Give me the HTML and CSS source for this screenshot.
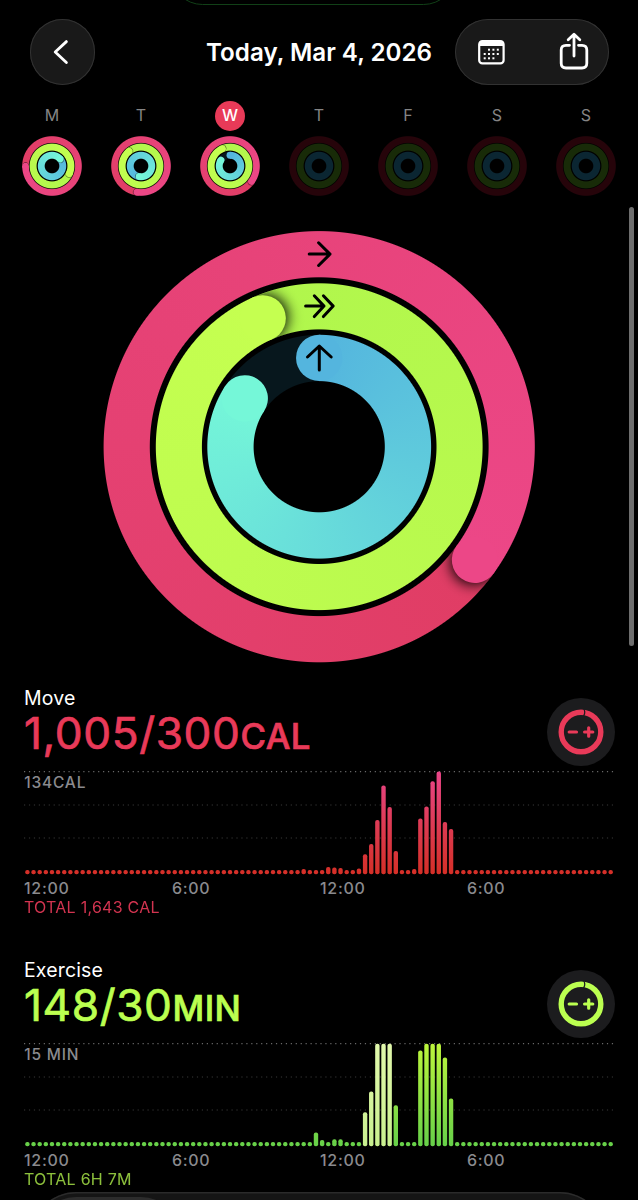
FILE: index.html
```
<!DOCTYPE html>
<html lang="en">
<head>
    <meta charset="UTF-8">
    <meta name="viewport" content="width=device-width, initial-scale=1.0">
    <title>Activity</title>
    <link rel="stylesheet" href="styles.css">
</head>
<body>

<div class="screen">
    <div class="island"></div>

    <header class="header">
        <a class="back" href="#">
            <svg width="65" height="66" viewBox="0 0 65 66"><path class="line" d="M36.4 22.6 L25.2 33 L36.4 43.6"/></svg>
        </a>
        <h1 class="title">Today, Mar 4, 2026</h1>
        <div class="actions">
            <svg width="154" height="66" viewBox="455 19 154 66">
                <rect class="line thin" x="479.2" y="41.2" width="24.4" height="22.2" rx="3.2"/>
                <path class="fill" d="M479 46 V44 Q479 41 482 41 H501 Q504 41 504 44 V46 Z"/>
                <g class="fill">
                    <rect x="488" y="48.7" width="2" height="2"/><rect x="492.4" y="48.7" width="2" height="2"/><rect x="496.8" y="48.7" width="2" height="2"/>
                    <rect x="483.7" y="53" width="2" height="2"/><rect x="488" y="53" width="2" height="2"/><rect x="492.4" y="53" width="2" height="2"/><rect x="496.8" y="53" width="2" height="2"/>
                    <rect x="483.7" y="57.3" width="2" height="2"/><rect x="488" y="57.3" width="2" height="2"/><rect x="492.4" y="57.3" width="2" height="2"/>
                </g>
                <path class="line" d="M569.5 45.3 H566 Q561.2 45.3 561.2 50 V63.3 Q561.2 68 566 68 H582 Q586.8 68 586.8 63.3 V50 Q586.8 45.3 582 45.3 H578.5"/>
                <path class="line" d="M574 35 V56 M568.2 39.7 L574 34.2 L579.8 39.7"/>
            </svg>
        </div>
    </header>

    <ul class="week" id="week"></ul>

    <div class="dial" id="dial">
        <svg class="arrows" width="432" height="432" viewBox="103 231 432 432">
            <path d="M309.2 254.1 H330 M318.6 242.8 L330 254.1 L318.6 265.5"/>
            <path d="M305.6 306.1 H324 M314.3 295.8 L324 306.1 L314.3 316.6 M323.4 295.8 L333.2 306.1 L323.4 316.6"/>
            <path d="M319.3 370 V346 M307.5 357 L319.3 346 L331.2 357"/>
        </svg>
    </div>

    <section class="metric move">
        <div class="metric-head">
            <div>
                <h2>Move</h2>
                <p class="value">1,005/300<span>CAL</span></p>
            </div>
            <button class="goal">
                <svg width="68" height="68" viewBox="-34 -34 68 68">
                    <circle r="19.8"/>
                    <path class="cut" d="M2.6 -23.5 Q5 -19.8 2.6 -16"/>
                    <path class="sign" d="M-11.8 0 H-4.5 M3.6 0 H11.8 M7.7 -4.2 V4.2"/>
                </svg>
            </button>
        </div>
        <svg class="chart" id="move-chart" width="590" height="108" viewBox="24 0 590 108">
            <defs>
                <linearGradient id="red" gradientUnits="userSpaceOnUse" x1="0" y1="104" x2="0" y2="2">
                    <stop offset="0" stop-color="#d52f27"/>
                    <stop offset=".45" stop-color="#dc3a50"/>
                    <stop offset="1" stop-color="#e94588"/>
                </linearGradient>
            </defs>
            <text x="24.3" y="18.3">134CAL</text>
        </svg>
        <div class="axis"><span>12:00</span><span>6:00</span><span>12:00</span><span>6:00</span></div>
        <p class="total">TOTAL 1,643 CAL</p>
    </section>

    <section class="metric exercise">
        <div class="metric-head">
            <div>
                <h2>Exercise</h2>
                <p class="value">148/30<span>MIN</span></p>
            </div>
            <button class="goal">
                <svg width="68" height="68" viewBox="-34 -34 68 68">
                    <circle r="19.8"/>
                    <path class="cut" d="M2.6 -23.5 Q5 -19.8 2.6 -16"/>
                    <path class="sign" d="M-11.8 0 H-4.5 M3.6 0 H11.8 M7.7 -4.2 V4.2"/>
                </svg>
            </button>
        </div>
        <svg class="chart" id="exercise-chart" width="590" height="108" viewBox="24 0 590 108">
            <defs>
                <linearGradient id="green" gradientUnits="userSpaceOnUse" x1="0" y1="104" x2="0" y2="2">
                    <stop offset="0" stop-color="#66d049"/>
                    <stop offset="1" stop-color="#bdf53c"/>
                </linearGradient>
                <linearGradient id="pale" gradientUnits="userSpaceOnUse" x1="0" y1="104" x2="0" y2="2">
                    <stop offset="0" stop-color="#c9f08f"/>
                    <stop offset="1" stop-color="#e2f9ac"/>
                </linearGradient>
            </defs>
            <text x="24.3" y="18.3">15 MIN</text>
        </svg>
        <div class="axis"><span>12:00</span><span>6:00</span><span>12:00</span><span>6:00</span></div>
        <p class="total">TOTAL 6H 7M</p>
    </section>

    <div class="scrollbar"></div>
    <nav class="tabbar"><div class="tab"></div></nav>
</div>

<script>
    var NS = "http://www.w3.org/2000/svg";

    // first colour, last colour of each ring
    var colors = [["#e03d64", "#ec4787"], ["#b0f64c", "#c5ff50"], ["#54b5de", "#75f7d8"]];
    var empty = ["#26040a", "#182b08", "#0b2632"];

    // outer and inner radius of each ring
    var big = [[215.6, 169.4], [163.4, 117.3], [111.9, 65.6]];
    var small = [[29.8, 23.1], [22.4, 15.4], [14.2, 7.3]];

    // ends: where each ring stops, in degrees from the top
    var days = [
        {name: "M", ends: [270, 114, 50]},
        {name: "T", ends: [189, 321, 190]},
        {name: "W", ends: [126, 336.3, 303], open: true, today: true},
        {name: "T"},
        {name: "F"},
        {name: "S"},
        {name: "S"}
    ];

    function addRing(box, sizes, i, end, open) {
        var ring = document.createElement("div");
        ring.className = "ring";
        var c = end == null ? [empty[i], empty[i]] : colors[i];
        var partial = open && i == 2;
        ring.style.setProperty("--outer", sizes[i][0] + "px");
        ring.style.setProperty("--inner", sizes[i][1] + "px");
        ring.style.setProperty("--start", (partial ? 0 : end || 0) + "deg");
        ring.style.setProperty("--sweep", (partial ? end : 360) + "deg");
        ring.style.setProperty("--a", c[0]);
        ring.style.setProperty("--b", c[1]);
        box.appendChild(ring);
    }

    function capSvg(sizes, day, w, cx, cy) {
        var s = "<svg class='caps' width='" + w + "' height='" + w + "'>";
        var blur = w > 100 ? 7 : 0.6;
        for (var i = 0; i < 3; i++) {
            var o = sizes[i][0], n = sizes[i][1];
            var r = (o + n) / 2, half = (o - n) / 2;
            var partial = day.open && i == 2;
            var id = "half-" + day.name + "-" + w + "-" + i;
            s += "<g transform='translate(" + cx + " " + cy + ") rotate(" + day.ends[i] + ")'>";
            if (!partial) {
                // the shadow falls only on the ring itself, ahead of the cap
                s += "<clipPath id='" + id + "'><path d='M0 " + -o + " A" + o + " " + o + " 0 0 1 0 " + o +
                     " V" + n + " A" + n + " " + n + " 0 0 0 0 " + -n + " Z'/></clipPath>";
                s += "<g clip-path='url(#" + id + ")'><circle cx='" + blur * 0.3 + "' cy='" + -r + "' r='" + half +
                     "' style='filter:blur(" + blur + "px)'/></g>";
            }
            s += "<circle cy='" + -r + "' r='" + half + "' fill='" + colors[i][1] + "'/></g>";
            if (partial) {
                s += "<circle cx='" + cx + "' cy='" + (cy - r) + "' r='" + half + "' fill='" + colors[i][0] + "'/>";
            }
        }
        return s + "</svg>";
    }

    function drawRings(box, sizes, day, w, cx, cy) {
        for (var i = 0; i < 3; i++) addRing(box, sizes, i, day.ends ? day.ends[i] : null, day.open);
        if (day.ends) box.insertAdjacentHTML("beforeend", capSvg(sizes, day, w, cx, cy));
    }

    var week = document.getElementById("week");
    days.forEach(function (day) {
        var li = document.createElement("li");
        li.innerHTML = "<span" + (day.today ? " class='today'" : "") + ">" + day.name + "</span><div class='mini'></div>";
        week.appendChild(li);
        drawRings(li.lastChild, small, day, 60, 30, 30);
    });

    drawRings(document.getElementById("dial"), big, days[2], 432, 216.2, 215.7);

    // one bar for each quarter of an hour, only those above the minimum are listed
    var moveBars = {45: 5.2, 49: 7.3, 50: 6.7, 51: 6.3, 54: 5.7, 55: 20, 56: 30.3, 57: 54.3, 58: 88.7, 59: 67.3, 60: 23.3,
                    63: 5.3, 64: 55.7, 65: 67.7, 66: 93, 67: 102.7, 68: 52.3, 69: 45.3};
    var exerciseBars = {47: 13.7, 48: 6.3, 50: 7, 51: 7, 55: 34, 56: 54.7, 57: 102.5, 58: 102.5, 59: 102.5, 60: 41,
                        64: 95.7, 65: 102.5, 66: 102.5, 67: 102.5, 68: 88.7, 69: 47.7};

    function add(svg, name, attrs) {
        var el = document.createElementNS(NS, name);
        for (var k in attrs) el.setAttribute(k, attrs[k]);
        svg.appendChild(el);
    }

    function drawChart(id, bars, fill) {
        var svg = document.getElementById(id);
        [1.7, 35, 68].forEach(function (y, i) {
            add(svg, "line", {x1: 24, x2: 614, y1: y, y2: y, "class": i ? "grid" : "grid top"});
        });
        for (var i = 0; i < 96; i++) {
            var h = bars[i] || 4.4;
            var f = id == "exercise-chart" && i >= 55 && i <= 59 ? "url(#pale)" : fill;
            add(svg, "rect", {x: 25.2 + i * 6.14, y: 104.3 - h, width: 4.4, height: h, rx: 2, fill: f});
        }
    }
    drawChart("move-chart", moveBars, "url(#red)");
    drawChart("exercise-chart", exerciseBars, "url(#green)");
</script>
</body>
</html>
```
FILE: styles.css
```
* {
    padding: 0;
    margin: 0;
    box-sizing: border-box;
}
body {
    background: #000;
    color: #fff;
    font-family: Inter, "Liberation Sans", sans-serif;
}
svg {
    display: block;
}
.screen {
    position: relative;
    width: 638px;
    height: 1200px;
    overflow: hidden;
    background: #000;
}
.island {
    position: absolute;
    left: 170px;
    top: -60px;
    width: 286px;
    height: 65px;
    border: 1.5px solid #114017;
    border-radius: 33px;
}

/* header */
.header {
    display: flex;
    align-items: center;
    padding: 19px 29px 0 30px;
}
.back {
    width: 65px;
    height: 66px;
    border-radius: 33px;
    background: #191919;
    box-shadow: inset 0 0 0 1px #323232;
}
.title {
    flex: 1;
    padding-left: 111px;
    font-size: 24.2px;
    font-weight: 600;
    white-space: nowrap;
}
.actions {
    width: 154px;
    height: 66px;
    border-radius: 33px;
    background: #191919;
    box-shadow: inset 0 0 0 1px #323232;
}
.line {
    fill: none;
    stroke: #fff;
    stroke-width: 2.8;
    stroke-linecap: round;
    stroke-linejoin: round;
}
.thin {
    stroke-width: 2.2;
}
.fill {
    fill: #fff;
}

/* week */
.week {
    display: flex;
    gap: 29px;
    padding: 16px 0 0 22px;
    list-style-type: none;
}
.week li {
    flex: none;
    width: 60px;
}
.week span {
    display: block;
    width: 30px;
    height: 30px;
    margin: 0 auto 5px;
    border-radius: 15px;
    line-height: 29px;
    font-size: 16px;
    text-align: center;
    color: #858585;
}
.week .today {
    background: #e83a58;
    color: #fff;
    font-weight: 500;
}

/* rings */
.mini, .dial {
    display: grid;
}
.mini {
    --cx: 30px;
    --cy: 30px;
    width: 60px;
    height: 60px;
}
.dial {
    --cx: 216.2px;
    --cy: 215.7px;
    width: 432px;
    height: 432px;
    margin: 35px 0 0 103px;
}
.ring, .caps, .arrows {
    grid-area: 1 / 1;
}
.ring {
    background: conic-gradient(from var(--start) at var(--cx) var(--cy), var(--a), var(--b) var(--sweep), #07171d var(--sweep));
    mask-image: radial-gradient(circle at var(--cx) var(--cy), transparent calc(var(--inner) - .5px), #000 calc(var(--inner) + .5px), #000 calc(var(--outer) - .5px), transparent calc(var(--outer) + .5px));
}
.caps {
    z-index: 1;
}
.arrows {
    z-index: 2;
}
.arrows path {
    fill: none;
    stroke: #000;
    stroke-width: 3;
    stroke-linecap: round;
    stroke-linejoin: round;
}

/* metrics */
.metric {
    height: 272px;
    padding: 0 24px;
}
.move {
    --tint: #e93a59;
    margin-top: 21px;
}
.exercise {
    --tint: #bbff50;
}
.metric-head {
    display: flex;
    justify-content: space-between;
    height: 86px;
}
.metric h2 {
    line-height: 28px;
    font-size: 19.5px;
    font-weight: 400;
    letter-spacing: .15px;
}
.value {
    line-height: 42px;
    font-size: 44.2px;
    font-weight: 400;
    letter-spacing: .6px;
    color: var(--tint);
    -webkit-text-stroke: .7px var(--tint);
    white-space: nowrap;
}
.value span {
    font-size: 34.8px;
    font-weight: 500;
    letter-spacing: .4px;
}
.goal {
    width: 68px;
    height: 68px;
    margin: 14px -1px 0 0;
    border: 0;
    border-radius: 50%;
    background: #1c1c1e;
}
.goal circle {
    fill: none;
    stroke: var(--tint);
    stroke-width: 5.4;
}
.goal .cut {
    fill: none;
    stroke: #1c1c1e;
    stroke-width: 1.3;
}
.goal .sign {
    fill: none;
    stroke: var(--tint);
    stroke-width: 3.2;
    stroke-linecap: round;
}
.chart text {
    fill: #8a8a8e;
    font-size: 15.5px;
    font-weight: 500;
    letter-spacing: .8px;
}
.grid {
    stroke: #383838;
    stroke-width: 1.2;
    stroke-dasharray: 1.2 3.74;
}
.grid.top {
    stroke: #686868;
}
.axis {
    display: grid;
    grid-template-columns: 148px 148px 147px 1fr;
    line-height: 20px;
    font-size: 16px;
    font-weight: 500;
    letter-spacing: .7px;
    color: #8a8a8e;
}
.total {
    line-height: 18px;
    font-size: 16px;
    letter-spacing: .25px;
    color: var(--tint);
    opacity: .9;
}
.exercise .total {
    opacity: .75;
}

/* overlays */
.scrollbar {
    position: absolute;
    left: 629px;
    top: 207px;
    width: 5px;
    height: 439px;
    border-radius: 3px;
    background: #6e6e6e;
}
.tabbar {
    position: absolute;
    left: 31px;
    top: 1192px;
    width: 574px;
    height: 90px;
    padding: 5px;
    border-radius: 45px;
    background: #151515;
    box-shadow: inset 0 0 0 1.5px #2b2b2b;
}
.tab {
    width: 145px;
    height: 80px;
    border-radius: 40px;
    background: #2c2c2c;
}
```
